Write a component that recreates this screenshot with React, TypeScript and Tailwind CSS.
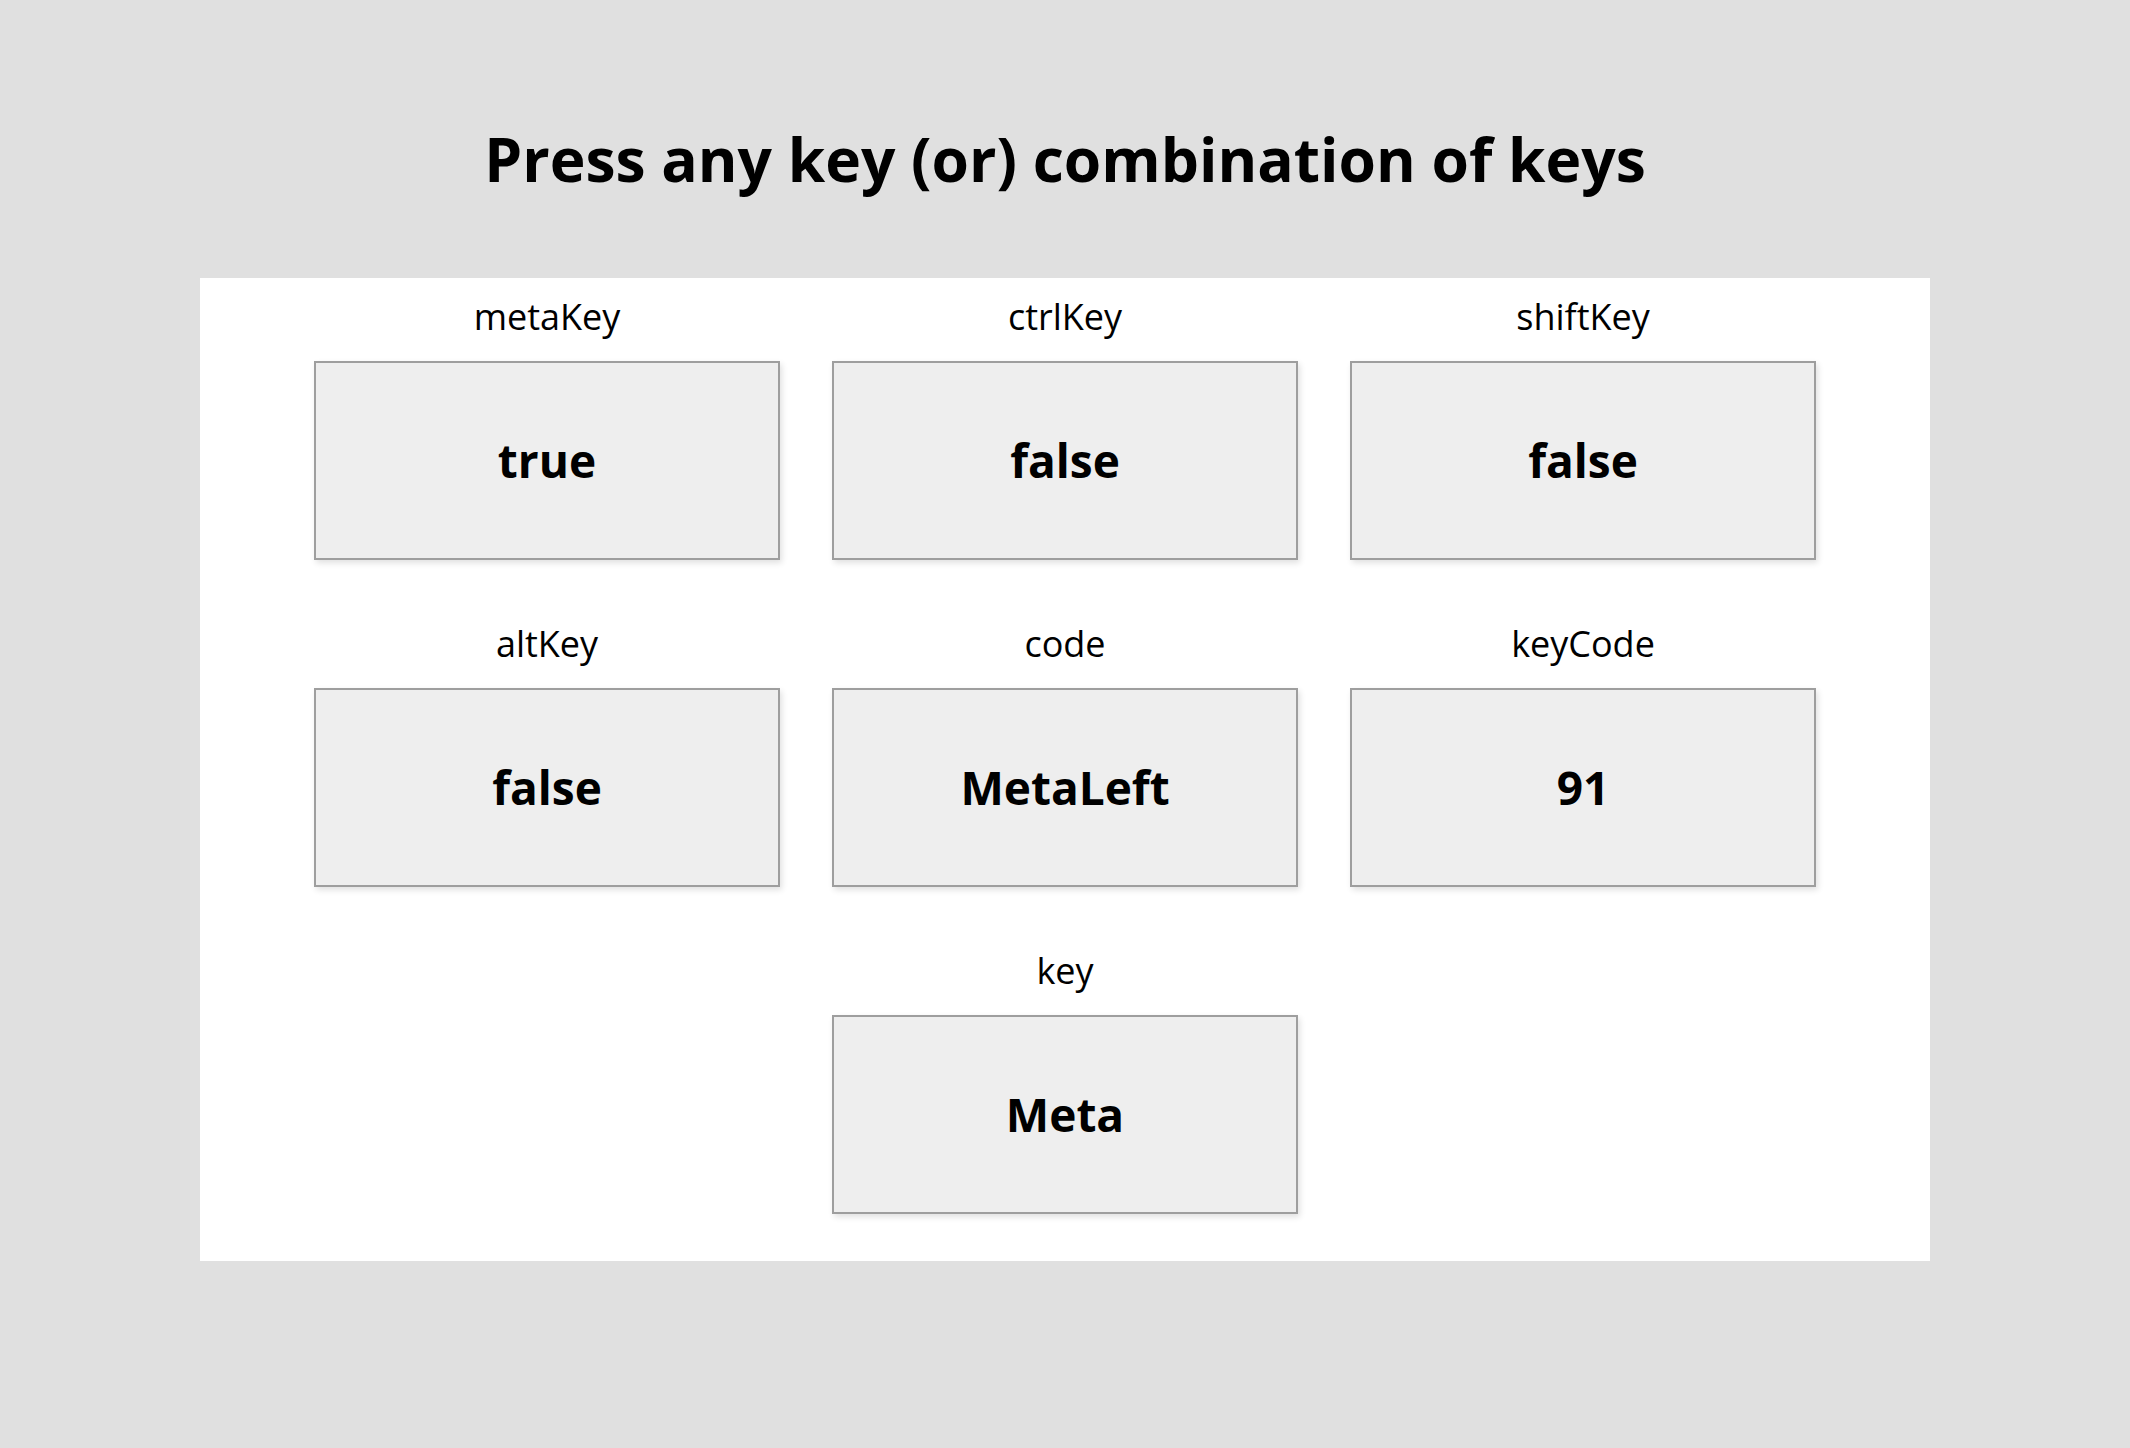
import React from "react";

const items = [
  { label: "metaKey", value: "true" },
  { label: "ctrlKey", value: "false" },
  { label: "shiftKey", value: "false" },
  { label: "altKey", value: "false" },
  { label: "code", value: "MetaLeft" },
  { label: "keyCode", value: "91" },
  { label: "key", value: "Meta" },
];

const KeyBox: React.FC<{ label: string; value: string }> = ({ label, value }) => (
  <div className="flex flex-col items-center w-[466px]">
    <div className="text-[36px] leading-[48px] text-black">{label}</div>
    <div className="mt-[20px] w-full h-[199px] flex items-center justify-center bg-[#eeeeee] border-2 border-[#9e9e9e] shadow-[2px_3px_6px_rgba(0,0,0,0.12)]">
      <span className="text-[46px] font-bold text-black">{value}</span>
    </div>
  </div>
);

export default function App() {
  return (
    <div
      className="min-h-screen bg-[#e0e0e0] pt-[119px] pb-[120px]"
      style={{ fontFamily: '"Open Sans", "Noto Sans", sans-serif' }}
    >
      <h1 className="text-center text-[60.5px] leading-[80px] font-bold text-black mb-[79px]">
        Press any key (or) combination of keys
      </h1>
      <div className="w-[1730px] mx-auto bg-white pt-[15px] pb-[47px] px-[112px]">
        <div className="flex flex-wrap justify-center gap-x-[52px] gap-y-[60px]">
          {items.map((it) => (
            <KeyBox key={it.label} label={it.label} value={it.value} />
          ))}
        </div>
      </div>
    </div>
  );
}
